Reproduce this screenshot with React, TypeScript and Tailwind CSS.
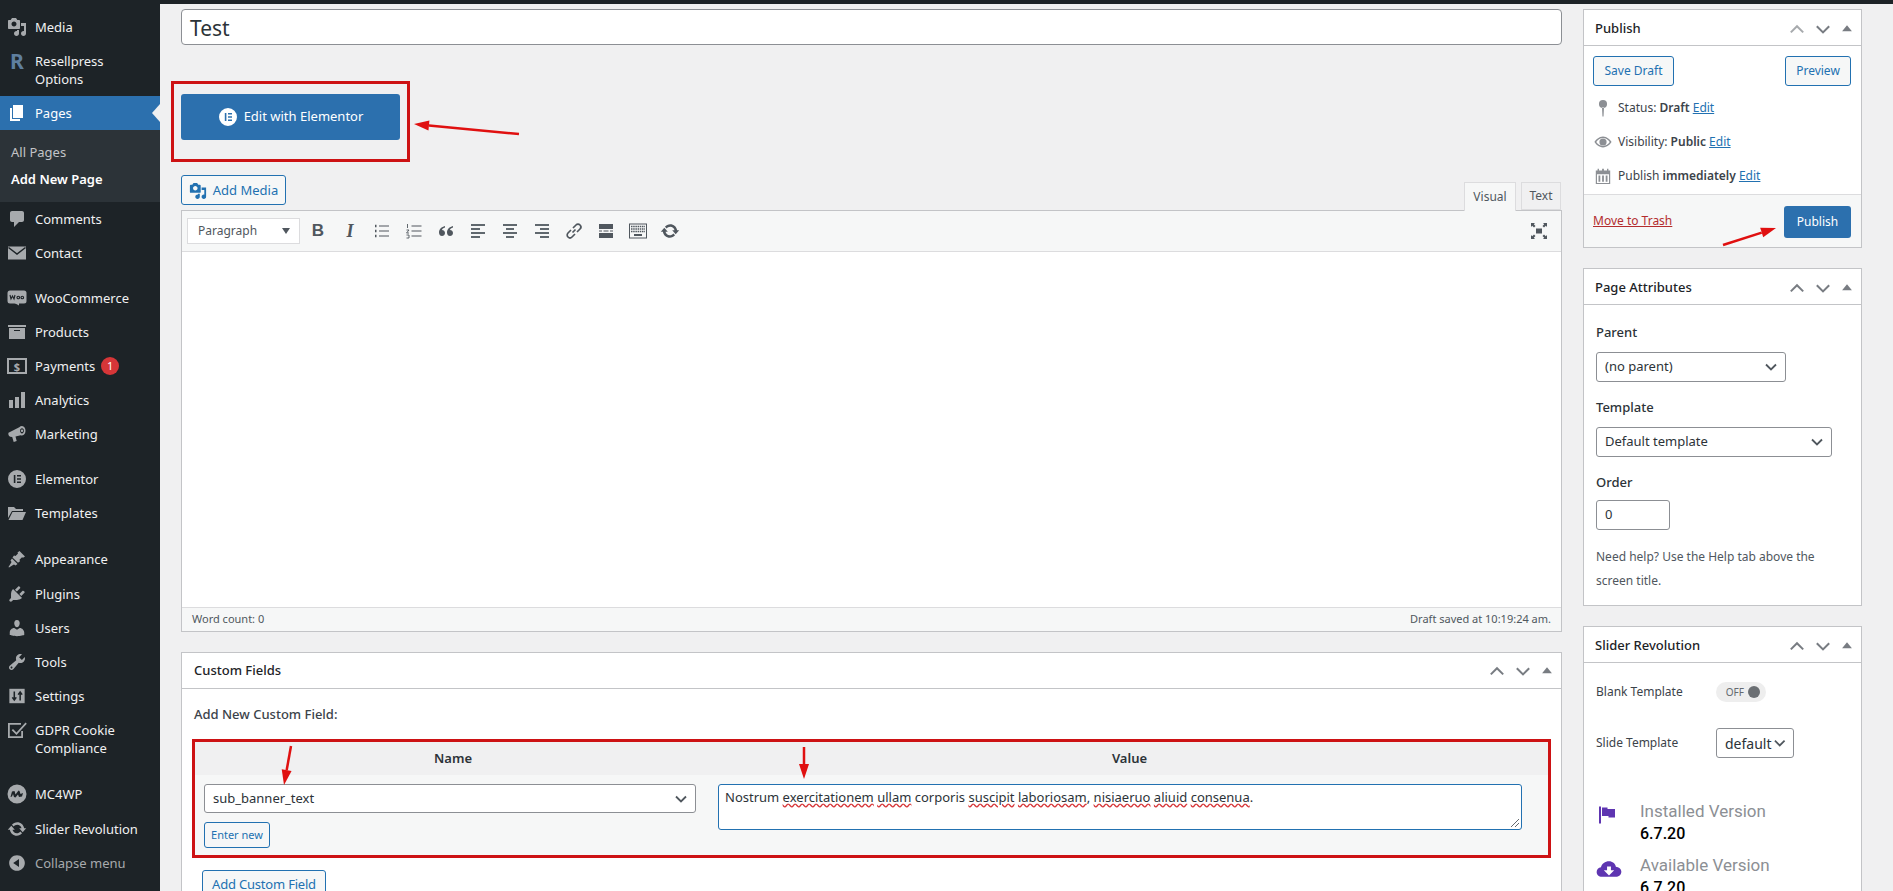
import type { ReactNode } from 'react';

const FONT = "font-['Noto_Sans','Open_Sans',sans-serif]";

// dashicons-style glyphs on a 20x20 box
const Glyph = ({ d, className = 'w-5 h-5' }: { d: string; className?: string }) => (
  <svg viewBox="0 0 20 20" className={className} fill="currentColor" fillRule="evenodd">
    <path d={d} />
  </svg>
);

const PATHS = {
  media: 'M13 11V4c0-.55-.45-1-1-1h-1.67L9 1H5L3.67 3H2c-.55 0-1 .45-1 1v7c0 .55.45 1 1 1h10c.55 0 1-.45 1-1zM7 4.5c1.38 0 2.5 1.12 2.5 2.5S8.38 9.5 7 9.5 4.5 8.38 4.5 7 5.62 4.5 7 4.5zM14 6h5v10.5c0 1.38-1.12 2.5-2.5 2.5S14 17.88 14 16.5s1.12-2.5 2.5-2.5c.17 0 .34.02.5.05V9h-3V6zm-4 8.05V13h2v3.5c0 1.38-1.12 2.5-2.5 2.5S7 17.88 7 16.5 8.12 14 9.5 14c.17 0 .34.02.5.05z',
  pages: 'M6 15V2h10v13H6zm-1 1h8v2H3V5h2v11z',
  comments: 'M5 2h10c1.1 0 2 .9 2 2v7c0 1.1-.9 2-2 2h-3l-5 5v-5H5c-1.1 0-2-.9-2-2V4c0-1.1.9-2 2-2z',
  products: 'M19 3v2H1V3h18zM2 6h16v11H2V6zm11 3V8H7v1h6z',
  analytics: 'M18 18V2h-4v16h4zm-6 0V7H8v11h4zm-6 0v-8H2v8h4z',
  marketing: 'M15 2c2.2 0 3.5 2.2 3.5 4.8S17.2 11.5 15 11.5c-.5 0-.9-.1-1.3-.3L8.5 12.5l1.2 4.6-3 1-1.5-5.2-2-.2C1.5 12.2 1 10 1.5 8.8L12.3 3.2C13 2.4 14 2 15 2zm0 2.2c-1.1 0-2 1.2-2 2.6s.9 2.6 2 2.6 2-1.2 2-2.6-.9-2.6-2-2.6zm0 1.3a1.2 1.2 0 110 2.5 1.2 1.2 0 010-2.5z',
  elementor: 'M10 1a9 9 0 100 18 9 9 0 000-18zM6.8 6h1.6v8H6.8V6zm3.2 0h4v1.6h-4V6zm0 3.2h4v1.6h-4V9.2zm0 3.2h4V14h-4v-1.6z',
  templates: 'M1 4h6l2 2h7v2H5L1 15V4zm4.5 5H19l-3.5 8H1.5l4-8z',
  appearance: 'M12.5 2l5.5 5.500-2 1.200-1-.5-2.500 2.500.5 1.500-2 1.500L5.500 8.500 7 6.500l1.500.5L11 4.500 10.500 3.500 12.500 2zM5 9.500l5.500 5.500-2 1.500-1.500-1-1 .5-4 2.500-.5-.5 2.500-4 .5-1-1-1.500L5 9.500z',
  plugins: 'M13.11 4.36L9.87 7.6 8 5.73l3.24-3.24c.35-.34 1.05-.2 1.56.32.52.51.66 1.21.31 1.55zm-8 1.77l.91-1.12 9.01 9.01-1.19.84c-.71.71-2.63 1.16-3.82 1.16H6.14L4.9 17.26c-.59.59-1.54.59-2.12 0-.59-.58-.59-1.53 0-2.12l1.24-1.24v-3.88c0-1.13.4-3.19 1.09-3.89zm7.26 3.97l3.24-3.24c.34-.35 1.04-.21 1.55.31.52.51.66 1.21.31 1.55l-3.24 3.25z',
  users: 'M10 9.25c-2.27 0-2.73-3.44-2.73-3.44C7 4.02 7.82 2 9.97 2c2.16 0 2.98 2.02 2.71 3.81 0 0-.41 3.44-2.68 3.44zm0 2.57L12.72 10c2.39 0 4.52 2.33 4.52 4.53v2.49s-3.65 1.13-7.24 1.13c-3.65 0-7.24-1.13-7.24-1.13v-2.49c0-2.25 1.94-4.48 4.47-4.48z',
  tools: 'M16.68 9.77c-1.34 1.34-3.3 1.67-4.95.99l-5.41 6.52c-.99.99-2.59.99-3.58 0s-.99-2.59 0-3.57l6.52-5.42c-.68-1.65-.35-3.61.99-4.95 1.28-1.28 3.12-1.62 4.72-1.06l-2.89 2.89 2.82 2.82 2.86-2.87c.53 1.58.18 3.39-1.08 4.65zM3.81 16.21c.4.39 1.04.39 1.43 0 .4-.4.4-1.04 0-1.43-.39-.4-1.03-.4-1.43 0-.39.39-.39 1.03 0 1.43z',
  checkbox: 'M1 3h13v1.8H2.8v11.4h11.4V11H16v7H1V3zm17.5-.5l1.3 1.3L9.5 15 4.7 10.2 6 8.9l3.5 3.5 9-9.9z',
  mailchimp: 'M10 .5a9.5 9.5 0 100 19 9.5 9.5 0 000-19zM3.5 13l1.5-5.5 2.5-.5 1 3.5 3-4 1 .5 1 3 2.5-1-1 3.5-3 .5-1-2.5-2.5 3-1.5-.5-1-3-1 2.5-1.5.5z',
  update: 'M10.2 3.28c3.53 0 6.43 2.61 6.92 6h2.08l-3.5 4-3.5-4h2.32c-.45-1.97-2.21-3.45-4.32-3.45-1.45 0-2.73.71-3.54 1.78L4.95 5.66C6.23 4.2 8.11 3.28 10.2 3.28zm-.4 13.44c-3.52 0-6.43-2.61-6.92-6H.8l3.5-4c1.17 1.33 2.33 2.67 3.5 4H5.48c.45 1.97 2.21 3.45 4.32 3.45 1.45 0 2.73-.71 3.54-1.78l1.71 1.95c-1.28 1.46-3.15 2.38-5.25 2.38z',
  collapse: 'M10 2.16c4.33 0 7.84 3.51 7.84 7.84s-3.51 7.84-7.84 7.84S2.16 14.33 2.16 10 5.71 2.16 10 2.16zm2 11.72V6.12L6.18 9.97z',
  pin: 'M10 1a4.500 4.500 0 110 9 4.500 4.500 0 010-9zM8.900 9.500h2.200L10.600 19.500H9.400L8.900 9.500z',
  eye: 'M10 4c4.500 0 8 3.600 9.500 6-1.500 2.400-5 6-9.500 6S2 12.400.5 10C2 7.600 5.500 4 10 4zm0 1.600c-3.200 0-6 2.300-7.500 4.400 1.500 2.100 4.300 4.400 7.500 4.400s6-2.300 7.500-4.400C16 7.900 13.200 5.600 10 5.600zM10 6a4 4 0 110 8 4 4 0 010-8z',
  calendar: 'M2 4h2V2h1.500v2h3.500V2h2v2h3.500V2H16v2h2v15H2V4zm1.300 4v9.700h13.400V8H3.300zM5 9.500h2v7H5v-7zm4 0h2v7H9v-7zm4 0h2v7h-2v-7z',
  flag: 'M2 1.500h2v17H2v-17zM5 2.500h5.500v1.500H18v8.500h-6.500V11H5V2.500z',
  cloud: 'M10 4c2.700 0 4.800 1.800 5.300 4.200 2.200.2 4.200 1.700 4.200 3.900 0 2.300-2 3.900-4.300 3.900H4.500C2.200 16 .5 14.400.5 12.300c0-1.900 1.400-3.400 3.300-3.700C4.500 6 7 4 10 4zM8.500 8v3H6l4 4 4-4h-2.500V8h-3z',
};

type Item = {
  icon: ReactNode;
  label: string;
  sep?: 'normal' | 'wide';
  tall?: boolean;
  second?: string;
  badge?: boolean;
  muted?: boolean;
};

const WooIcon = () => (
  <svg viewBox="0 0 20 20" className="w-5 h-5">
    <rect x="0.5" y="2.500" width="19" height="13" rx="2.500" fill="currentColor" />
    <path d="M4 13 12 17.500v-3z" fill="currentColor" />
    <path d="M3 7l1 4 1.500-3 1.500 3 1-4M10 9.500a1.300 1.300 0 102.600 0 1.300 1.300 0 10-2.600 0M14 9.500a1.300 1.300 0 102.600 0 1.300 1.300 0 10-2.600 0" fill="none" stroke="#1d2327" strokeWidth="1.100" />
  </svg>
);

const PaymentsIcon = () => (
  <span className="w-5 h-[16px] border-2 border-[#a7aaad] flex items-center justify-center text-[11px] font-bold leading-none">$</span>
);

const ContactIcon = () => (
  <svg viewBox="0 0 20 20" className="w-5 h-5">
    <rect x="1" y="3.500" width="18" height="13" fill="currentColor" />
    <path d="M1.500 4.500L10 11l8.500-6.500" fill="none" stroke="#1d2327" strokeWidth="1.500" />
  </svg>
);

const SettingsIcon = () => (
  <svg viewBox="0 0 20 20" className="w-[18px] h-[18px]">
    <rect x="1.500" y="2" width="17" height="16" fill="currentColor" />
    <path d="M7 5v9M4.800 11.500L7 14.500l2.200-3M13.500 15V6M11.300 8.500l2.200-3 2.200 3" fill="none" stroke="#1d2327" strokeWidth="1.700" />
  </svg>
);

const menuTop: Item[] = [
  { icon: <Glyph d={PATHS.media} />, label: 'Media' },
  { icon: <span className="text-[#5f7f9f] text-[21px] font-bold leading-none">R</span>, label: 'Resellpress', second: 'Options' },
];

const menuRest: Item[] = [
  { icon: <Glyph d={PATHS.comments} />, label: 'Comments' },
  { icon: <ContactIcon />, label: 'Contact' },
  { icon: <WooIcon />, label: 'WooCommerce', sep: 'normal' },
  { icon: <Glyph d={PATHS.products} />, label: 'Products' },
  { icon: <PaymentsIcon />, label: 'Payments', badge: true },
  { icon: <Glyph d={PATHS.analytics} />, label: 'Analytics' },
  { icon: <Glyph d={PATHS.marketing} />, label: 'Marketing' },
  { icon: <Glyph d={PATHS.elementor} />, label: 'Elementor', sep: 'normal' },
  { icon: <Glyph d={PATHS.templates} />, label: 'Templates' },
  { icon: <Glyph d={PATHS.appearance} />, label: 'Appearance', sep: 'wide', tall: true },
  { icon: <Glyph d={PATHS.plugins} />, label: 'Plugins' },
  { icon: <Glyph d={PATHS.users} />, label: 'Users' },
  { icon: <Glyph d={PATHS.tools} />, label: 'Tools' },
  { icon: <SettingsIcon />, label: 'Settings' },
  { icon: <Glyph d={PATHS.checkbox} />, label: 'GDPR Cookie', second: 'Compliance' },
  { icon: <Glyph d={PATHS.mailchimp} />, label: 'MC4WP', sep: 'wide', tall: true },
  { icon: <Glyph d={PATHS.update} />, label: 'Slider Revolution' },
  { icon: <Glyph d={PATHS.collapse} />, label: 'Collapse menu', muted: true },
];

function MenuRow({ item }: { item: Item }) {
  const height = item.second ? 'h-[52px]' : item.tall ? 'h-[35px]' : 'h-[34px]';
  const gap = item.sep === 'wide' ? 'mt-[12px]' : item.sep === 'normal' ? 'mt-[11px]' : '';
  return (
    <div className={`flex items-start pl-[7px] pt-[8px] ${height} ${gap}`}>
      <span className="w-5 h-[18px] flex items-center justify-center shrink-0 text-[#a7aaad]">{item.icon}</span>
      <span className={`ml-[8px] text-[13px] leading-[18px] ${item.muted ? 'text-[#a7aaad]' : 'text-[#f0f0f1]'}`}>
        {item.label}
        {item.second && <br />}
        {item.second}
        {item.badge && (
          <span className="inline-flex ml-[6px] w-[18px] h-[18px] rounded-full bg-[#d63638] text-white text-[11px] leading-[18px] items-center justify-center align-top">1</span>
        )}
      </span>
    </div>
  );
}

function Sidebar() {
  return (
    <aside className="w-[160px] shrink-0 bg-[#1d2327] pt-[6px] h-full">
      {menuTop.map((m) => (
        <MenuRow key={m.label} item={m} />
      ))}
      <div className="relative h-[34px] bg-[#2c70ae] flex items-center pl-[7px] text-white">
        <Glyph d={PATHS.pages} />
        <span className="ml-[8px] pt-[2px] text-[13px]">Pages</span>
        <span className="absolute right-0 top-[8px] border-y-[9px] border-y-transparent border-r-[8px] border-r-[#f0f0f1]" />
      </div>
      <div className="h-[72px] bg-[#2c3338] pl-[11px] pt-[13px] text-[13px] leading-[18px]">
        <div className="text-[#c3c4c7] h-[27px] leading-[18px]">All Pages</div>
        <div className="text-white font-semibold">Add New Page</div>
      </div>
      {menuRest.map((m) => (
        <MenuRow key={m.label} item={m} />
      ))}
    </aside>
  );
}

function SelectBox({ label, className = '', text = 'text-[13px] text-[#2c3338]' }: { label: string; className?: string; text?: string }) {
  return (
    <div className={`flex items-center justify-between bg-white border border-[#8c8f94] rounded-[3px] pl-[8px] pr-[6px] ${className}`}>
      <span className={text}>{label}</span>
      <svg viewBox="0 0 16 16" className="w-4 h-4 text-[#50575e]" fill="none" stroke="currentColor" strokeWidth="1.800">
        <path d="M3 5.500l5 5 5-5" />
      </svg>
    </div>
  );
}

function Handles({ faded = false }: { faded?: boolean }) {
  return (
    <div className="flex items-center text-[#787c82]">
      <svg viewBox="0 0 16 16" className={`w-[18px] h-[18px] ${faded ? 'text-[#a7aaad]' : ''}`} fill="none" stroke="currentColor" strokeWidth="1.800">
        <path d="M2.500 11L8 5.500 13.500 11" />
      </svg>
      <svg viewBox="0 0 16 16" className="w-[18px] h-[18px] ml-[8px]" fill="none" stroke="currentColor" strokeWidth="1.800">
        <path d="M2.500 5.500L8 11 13.500 5.500" />
      </svg>
      <svg viewBox="0 0 16 16" className="w-3 h-3 ml-[9px]" fill="currentColor">
        <path d="M8 3l6.500 8h-13z" />
      </svg>
    </div>
  );
}

function Box({ title, faded, low, className = '', children }: { title: string; faded?: boolean; low?: boolean; className?: string; children: ReactNode }) {
  return (
    <section className={`bg-white border border-[#c3c4c7] ${className}`}>
      <div className={`h-[36px] flex items-center justify-between pr-[8px] border-b border-[#c3c4c7] ${low ? 'pl-[11px] pt-[2px]' : 'pl-[12px]'}`}>
        <h2 className="text-[13px] font-medium text-[#1d2327]">{title}</h2>
        <Handles faded={faded} />
      </div>
      {children}
    </section>
  );
}

const OutlineButton = ({ children, className = '' }: { children: ReactNode; className?: string }) => (
  <button className={`flex items-center justify-center border border-[#2271b1] rounded-[3px] bg-[#f6f7f7] text-[#2271b1] text-[13px] ${className}`}>
    {children}
  </button>
);

function ToolIcon({ children }: { children: ReactNode }) {
  return <span className="w-[32px] h-5 flex items-center justify-center text-[#50575e]">{children}</span>;
}

const lines = (rows: string[]) => (
  <svg viewBox="0 0 20 20" className="w-5 h-5" fill="none" stroke="currentColor" strokeWidth="1.800">
    {rows.map((d) => (
      <path key={d} d={d} />
    ))}
  </svg>
);

function Toolbar() {
  return (
    <div className="h-[41px] bg-[#f6f7f7] border-b border-[#dcdcde] flex items-center pl-[5px] pr-[12px]">
      <div className="w-[113px] h-[26px] bg-white border border-[#dcdcde] flex items-center justify-between pl-[10px] pr-[9px]">
        <span className="text-[12px] text-[#50575e]">Paragraph</span>
        <span className="border-x-[4px] border-x-transparent border-t-[6px] border-t-[#50575e]" />
      </div>
      <div className="flex items-center ml-[2px]">
        <ToolIcon><span className="font-['Liberation_Sans'] text-[17px] font-bold">B</span></ToolIcon>
        <ToolIcon><span className="font-['Liberation_Serif'] text-[18px] font-bold italic">I</span></ToolIcon>
        <ToolIcon>
          <svg viewBox="0 0 20 20" className="w-5 h-5" fill="none" stroke="currentColor">
            <path d="M7 5h10M7 10h10M7 15h10" strokeWidth="1.200" />
            <path d="M3 5h1.500M3 10h1.500M3 15h1.500" strokeWidth="2.600" />
          </svg>
        </ToolIcon>
        <ToolIcon>
          <svg viewBox="0 0 20 20" className="w-5 h-5" fill="none" stroke="currentColor">
            <path d="M7.500 5h10M7.500 10h10M7.500 15h10" strokeWidth="1.200" />
            <path d="M3.500 3v4M2.500 9h2.500l-2.500 3h2.500M2.500 14h2.500v3h-2.500" strokeWidth="0.900" />
          </svg>
        </ToolIcon>
        <ToolIcon>
          <svg viewBox="0 0 20 20" className="w-5 h-5" fill="currentColor">
            <path d="M9 5C5.500 6 3 8 3 11.500 3 14 4.500 15 6 15s3-1 3-3-1.500-3-3-3c0-1 1.500-2 3-2.500V5zM17 5c-3.500 1-6 3-6 6.500 0 2.500 1.500 3.500 3 3.500s3-1 3-3-1.500-3-3-3c0-1 1.500-2 3-2.500V5z" />
          </svg>
        </ToolIcon>
        <ToolIcon>{lines(['M3 4h14', 'M3 8h9', 'M3 12h14', 'M3 16h9'])}</ToolIcon>
        <ToolIcon>{lines(['M3 4h14', 'M6 8h8', 'M3 12h14', 'M6 16h8'])}</ToolIcon>
        <ToolIcon>{lines(['M3 4h14', 'M8 8h9', 'M3 12h14', 'M8 16h9'])}</ToolIcon>
        <ToolIcon>
          <svg viewBox="0 0 20 20" className="w-5 h-5" fill="none" stroke="currentColor" strokeWidth="1.700">
            <path d="M8.500 11.500l3-3M7 9l-3 3a2.800 2.800 0 004 4l3-3M13 11l3-3a2.800 2.800 0 00-4-4L9 7" />
          </svg>
        </ToolIcon>
        <ToolIcon>
          <svg viewBox="0 0 20 20" className="w-5 h-5" fill="currentColor">
            <path d="M3 3h14v5H3zM3 12h14v5H3zM3 9.500h3v1H3zM7.500 9.500h5v1h-5zM14 9.500h3v1h-3z" />
          </svg>
        </ToolIcon>
        <ToolIcon>
          <svg viewBox="0 0 20 20" className="w-5 h-5" fill="none" stroke="currentColor" strokeWidth="1">
            <rect x="1.500" y="3" width="17" height="14" />
            <path d="M3 5.500h14M3 8h14M3 10.500h14" strokeDasharray="1.500 0.700" strokeWidth="1.300" />
            <path d="M6 14h8" strokeWidth="2" />
          </svg>
        </ToolIcon>
        <ToolIcon><Glyph d={PATHS.update} /></ToolIcon>
      </div>
      <span className="ml-auto text-[#50575e]">
        <svg viewBox="0 0 20 20" className="w-5 h-5" fill="currentColor">
          <path d="M7 7.500h6v5H7zM2 2h4L4.800 3.200 6.500 5 5 6.500 3.200 4.800 2 6zM18 2v4l-1.200-1.200L15 6.500 13.500 5l1.700-1.800L14 2zM2 18v-4l1.200 1.200L5 13.500 6.500 15l-1.700 1.800L6 18zM18 18h-4l1.200-1.200L13.500 15l1.500-1.500 1.800 1.700L18 14z" />
        </svg>
      </span>
    </div>
  );
}

function Editor() {
  return (
    <div>
      <div className="flex items-end justify-between h-[35px]">
        <OutlineButton className="w-[105px] h-[30px] mb-[5px] pt-[1px]">
          <Glyph d={PATHS.media} className="w-[18px] h-[18px] mr-[6px]" />
          Add Media
        </OutlineButton>
        <div className="flex items-end mr-[1px] text-[12px] text-[#50575e]">
          <div className="w-[52px] h-[29px] bg-[#f6f7f7] border border-[#dcdcde] border-b-0 flex items-center justify-center relative top-[1px]">Visual</div>
          <div className="w-[40px] h-[28px] bg-[#f0f0f1] border border-[#dcdcde] flex items-center justify-center ml-[5px]">Text</div>
        </div>
      </div>
      <div className="border border-[#c3c4c7]">
        <Toolbar />
        <div className="h-[355px] bg-white" />
        <div className="h-[24px] bg-[#f6f7f7] border-t border-[#dcdcde] flex items-center justify-between px-[10px] text-[11px] text-[#50575e]">
          <span>Word count: 0</span>
          <span>Draft saved at 10:19:24 am.</span>
        </div>
      </div>
    </div>
  );
}

const Misspelt = ({ children }: { children: ReactNode }) => (
  <span className="underline decoration-wavy decoration-[#d63638]">{children}</span>
);

function CustomFields() {
  return (
    <Box title="Custom Fields" className="mt-[20px]">
      <div className="px-[10px]">
        <p className="h-[50px] pt-[16px] pl-[2px] text-[13px] font-medium text-[#3c434a]">Add New Custom Field:</p>
        <div className="border-[3px] border-[#cd1214] h-[119px] flex flex-col">
          <div className="h-[33px] shrink-0 bg-[#f0f0f1] flex items-center text-[13px] font-semibold text-[#2c3338]">
            <span className="w-[516px] text-center">Name</span>
            <span className="flex-1 text-center">Value</span>
          </div>
          <div className="flex-1 bg-[#f6f7f7] flex pt-[9px] pl-[9px] pr-[26px]">
            <div className="w-[492px] shrink-0">
              <SelectBox label="sub_banner_text" className="h-[29px]" />
              <OutlineButton className="w-[66px] h-[26px] mt-[9px] !text-[11px]">Enter new</OutlineButton>
            </div>
            <div className="relative ml-[22px] flex-1 h-[46px] bg-white border border-[#2271b1] rounded-[3px] px-[6px] py-[3px] text-[13px] leading-[18px] text-[#2c3338]">
              Nostrum <Misspelt>exercitationem</Misspelt> <Misspelt>ullam</Misspelt> corporis{' '}
              <Misspelt>suscipit</Misspelt> <Misspelt>laboriosam</Misspelt>,{' '}
              <Misspelt>nisiaeruo</Misspelt> <Misspelt>aliuid</Misspelt> <Misspelt>consenua</Misspelt>.
              <svg viewBox="0 0 10 10" className="absolute right-[1px] bottom-[1px] w-[10px] h-[10px]" fill="none" stroke="#646970">
                <path d="M1 9l8-8M5 9l4-4" />
              </svg>
            </div>
          </div>
        </div>
        <OutlineButton className="w-[124px] h-[30px] mt-[12px] ml-[10px] tracking-[-0.2px]">Add Custom Field</OutlineButton>
      </div>
    </Box>
  );
}

function StatusRow({ icon, children }: { icon: string; children: ReactNode }) {
  return (
    <div className="h-[34px] flex items-center text-[12px] text-[#3c434a]">
      <span className="w-5 flex justify-center text-[#8c8f94] mr-[5px]"><Glyph d={icon} className="w-[18px] h-[18px]" /></span>
      <span>{children}</span>
    </div>
  );
}

const EditLink = () => <a className="text-[#2271b1] underline font-normal">Edit</a>;

function PublishBox() {
  return (
    <Box title="Publish" faded low>
      <div className="pl-[9px] pr-[10px] pt-[10px] h-[148px]">
        <div className="flex justify-between">
          <OutlineButton className="w-[81px] h-[30px] !text-[12px]">Save Draft</OutlineButton>
          <OutlineButton className="w-[66px] h-[30px] !text-[12px]">Preview</OutlineButton>
        </div>
        <div className="mt-[5px]">
          <StatusRow icon={PATHS.pin}>Status: <b className="font-semibold">Draft</b> <EditLink /></StatusRow>
          <StatusRow icon={PATHS.eye}>Visibility: <b className="font-semibold">Public</b> <EditLink /></StatusRow>
          <StatusRow icon={PATHS.calendar}>Publish <b className="font-semibold">immediately</b> <EditLink /></StatusRow>
        </div>
      </div>
      <div className="h-[53px] bg-[#f6f7f7] border-t border-[#dcdcde] flex items-center justify-between pl-[9px] pr-[10px]">
        <a className="text-[12px] text-[#b32d2e] underline">Move to Trash</a>
        <button className="w-[67px] h-[32px] mt-[1px] bg-[#2c70ae] rounded-[3px] text-white text-[12px]">Publish</button>
      </div>
    </Box>
  );
}

function PageAttributes() {
  return (
    <Box title="Page Attributes" low className="mt-[20px]">
      <div className="px-[12px] h-[300px] text-[#2c3338] text-[13px]">
        <p className="pt-[18px] h-[47px] font-medium">Parent</p>
        <SelectBox label="(no parent)" className="w-[190px] h-[30px]" />
        <p className="pt-[16px] h-[45px] font-medium">Template</p>
        <SelectBox label="Default template" className="w-[236px] h-[30px]" />
        <p className="pt-[16px] h-[43px] font-medium">Order</p>
        <div className="w-[74px] h-[30px] bg-white border border-[#8c8f94] rounded-[3px] pl-[8px] flex items-center">0</div>
        <p className="mt-[15px] text-[12px] leading-[24px] text-[#50575e]">Need help? Use the Help tab above the screen title.</p>
      </div>
    </Box>
  );
}

function SliderBox() {
  return (
    <Box title="Slider Revolution" low className="mt-[20px]">
      <div className="px-[12px] text-[12px] text-[#3c434a]">
        <div className="flex items-center h-[20px] mt-[19px]">
          <span className="w-[120px]">Blank Template</span>
          <div className="w-[50px] h-[20px] rounded-full bg-[#eeeeee] flex items-center justify-end pr-[6px] gap-[4px] text-[#646970] text-[10px]">
            OFF
            <span className="w-[12px] h-[12px] rounded-full bg-[#6b6f73]" />
          </div>
        </div>
        <div className="flex items-center h-[30px] mt-[26px]">
          <span className="w-[120px]">Slide Template</span>
          <SelectBox label="default" text="text-[14px] text-[#2c3338]" className="w-[78px] h-[30px]" />
        </div>
        <div className="flex mt-[42px] font-['Roboto',sans-serif]">
          <div className="w-[44px] shrink-0 pt-[5px] text-[#5e35b1]">
            <Glyph d={PATHS.flag} className="w-[20px] h-[20px] ml-[1px]" />
            <Glyph d={PATHS.cloud} className="w-[26px] h-[26px] mt-[31px]" />
          </div>
          <div>
            <p className="text-[17px] leading-[22px] text-[#8c8f94]">Installed Version</p>
            <p className="text-[16px] leading-[24px] font-medium text-black h-[32px]">6.7.20</p>
            <p className="text-[17px] leading-[22px] text-[#8c8f94]">Available Version</p>
            <p className="text-[16px] leading-[24px] font-medium text-black">6.7.20</p>
          </div>
        </div>
      </div>
    </Box>
  );
}

// red arrows drawn on top of the screenshot
const ARROWS = [
  { x1: 519, y1: 134, x2: 414, y2: 124 },
  { x1: 1723, y1: 245, x2: 1776, y2: 228 },
  { x1: 291, y1: 746, x2: 284, y2: 785 },
  { x1: 804, y1: 747, x2: 804, y2: 779 },
];

function Annotations() {
  return (
    <svg className="absolute inset-0 pointer-events-none" width={1893} height={891}>
      {ARROWS.map((a) => {
        const angle = Math.atan2(a.y2 - a.y1, a.x2 - a.x1);
        const bx = a.x2 - Math.cos(angle) * 15;
        const by = a.y2 - Math.sin(angle) * 15;
        const nx = -Math.sin(angle) * 5;
        const ny = Math.cos(angle) * 5;
        return (
          <g key={a.x1}>
            <line x1={a.x1} y1={a.y1} x2={bx} y2={by} stroke="#e01010" strokeWidth="2.500" />
            <polygon points={`${a.x2},${a.y2} ${bx + nx},${by + ny} ${bx - nx},${by - ny}`} fill="#e01010" />
          </g>
        );
      })}
    </svg>
  );
}

export default function App() {
  return (
    <div className={`relative w-[1893px] h-[891px] overflow-hidden bg-[#f0f0f1] flex flex-col ${FONT}`}>
      <div className="h-[4px] shrink-0 bg-[#1d2327]" />
      <div className="flex flex-1 min-h-0">
        <Sidebar />
        <main className="flex flex-1 pl-[21px] pt-[5px] min-w-0">
          <div className="w-[1381px] shrink-0">
            <div className="h-[36px] bg-white border border-[#8c8f94] rounded-[4px] flex items-center pl-[8px] pt-[4px] text-[21px] text-[#2c3338]">Test</div>
            <div className="-ml-[10px] mt-[36px] w-[239px] h-[81px] border-[3px] border-[#cd1214] pl-[7px] pt-[10px]">
              <button className="w-[219px] h-[46px] bg-[#2c70ae] rounded-[3px] flex items-center justify-center text-white text-[13px]">
                <Glyph d={PATHS.elementor} className="w-5 h-5 mr-[6px]" />
                Edit with Elementor
              </button>
            </div>
            <div className="mt-[13px]">
              <Editor />
            </div>
            <CustomFields />
          </div>
          <div className="w-[279px] ml-[21px] shrink-0">
            <PublishBox />
            <PageAttributes />
            <SliderBox />
          </div>
        </main>
      </div>
      <Annotations />
    </div>
  );
}
